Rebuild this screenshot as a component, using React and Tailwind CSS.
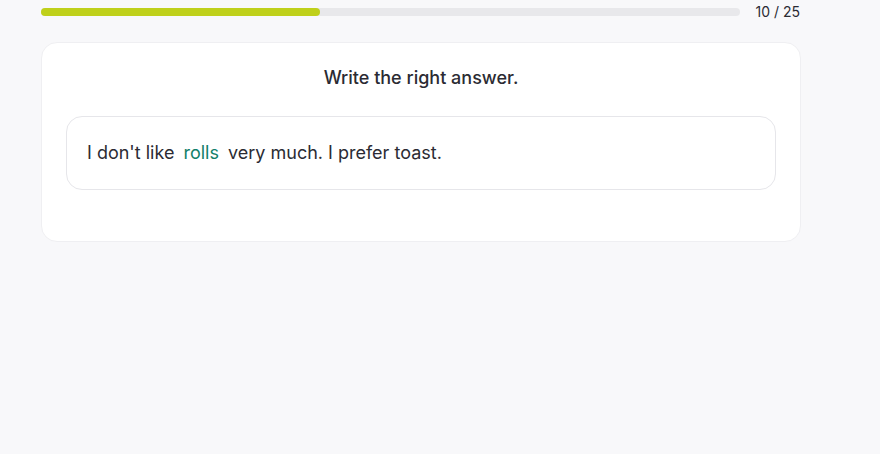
export default function App() {
  return (
    <div className="min-h-[454px] w-full bg-[#f8f8fa] font-['Inter',sans-serif] text-[#2b2b33]">
      <div className="ml-[41px] w-[760px] pt-[3px]">
        <div className="flex items-center gap-[16px]">
          <div className="h-2 flex-1 rounded-full bg-[#e8e8eb]">
            <div className="h-2 w-[40%] rounded-full bg-[#bfd01a]" />
          </div>
          <div className="pr-px text-[14px] leading-[17px] text-[#2b2b33]">10 / 25</div>
        </div>

        <div className="mt-[22px] rounded-2xl border border-[#efeff2] bg-white px-6 pb-[51px] pt-6">
          <h2 className="text-center text-[18px] font-medium leading-[22px]">Write the right answer.</h2>
          <div className="mt-[27px] rounded-2xl border border-[#e6e6ea] px-5 py-6">
            <p className="text-[18px] leading-6">
              I don't like <span className="mx-[4px] text-[#11806a]">rolls</span> very much. I prefer toast.
            </p>
          </div>
        </div>
      </div>
    </div>
  )
}
